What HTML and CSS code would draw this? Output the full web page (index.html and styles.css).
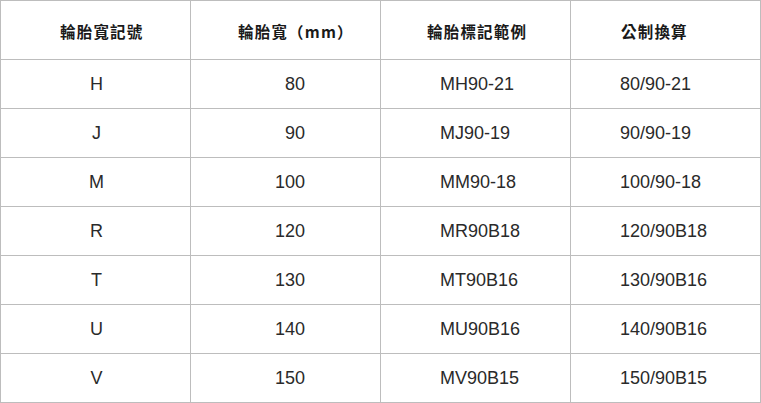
FILE: index.html
```html
<!DOCTYPE html>
<html lang="zh-Hant">
<head>
<meta charset="utf-8">
<link rel="stylesheet" href="styles.css">
</head>
<body>
<div class="table">
  <div class="cell head c1">輪胎寬記號</div>
  <div class="cell head c2">輪胎寬（mm）</div>
  <div class="cell head c3">輪胎標記範例</div>
  <div class="cell head c4">公制換算</div>

  <div class="cell c1">H</div><div class="cell c2">80</div><div class="cell c3">MH90-21</div><div class="cell c4">80/90-21</div>
  <div class="cell c1">J</div><div class="cell c2">90</div><div class="cell c3">MJ90-19</div><div class="cell c4">90/90-19</div>
  <div class="cell c1">M</div><div class="cell c2">100</div><div class="cell c3">MM90-18</div><div class="cell c4">100/90-18</div>
  <div class="cell c1">R</div><div class="cell c2">120</div><div class="cell c3">MR90B18</div><div class="cell c4">120/90B18</div>
  <div class="cell c1">T</div><div class="cell c2">130</div><div class="cell c3">MT90B16</div><div class="cell c4">130/90B16</div>
  <div class="cell c1">U</div><div class="cell c2">140</div><div class="cell c3">MU90B16</div><div class="cell c4">140/90B16</div>
  <div class="cell c1">V</div><div class="cell c2">150</div><div class="cell c3">MV90B15</div><div class="cell c4">150/90B15</div>
</div>
</body>
</html>
```
FILE: styles.css
```css
html, body {
  margin: 0;
  padding: 0;
  background: #fff;
}
.table {
  display: grid;
  grid-template-columns: repeat(4, 189px);
  grid-template-rows: 58px repeat(7, 48px);
  gap: 1px;
  padding: 1px;
  width: 759px;
  background: #bdbdbd;
  font-family: "Liberation Sans", "Noto Sans CJK TC", sans-serif;
  font-size: 18px;
  color: #2a2a2a;
}
.cell {
  background: #fff;
  display: flex;
  align-items: center;
  box-sizing: border-box;
}
.c1 { justify-content: center; padding-left: 2px; }
.c2 { justify-content: flex-end; padding-right: 75px; }
.c3 { justify-content: flex-start; padding-left: 59px; }
.c4 { justify-content: flex-start; padding-left: 49px; }
.head {
  font-family: "Noto Sans CJK TC", sans-serif;
  font-size: 15.5px;
  font-weight: 700;
  color: #1a1a1a;
  letter-spacing: 1.2px;
  padding-top: 2px;
}
.head.c1 { justify-content: flex-start; padding-left: 59px; }
.head.c2 { justify-content: flex-start; padding-left: 47px; padding-right: 0; }
.head.c3 { padding-left: 46px; }
.head.c4 { padding-left: 50px; }
```
